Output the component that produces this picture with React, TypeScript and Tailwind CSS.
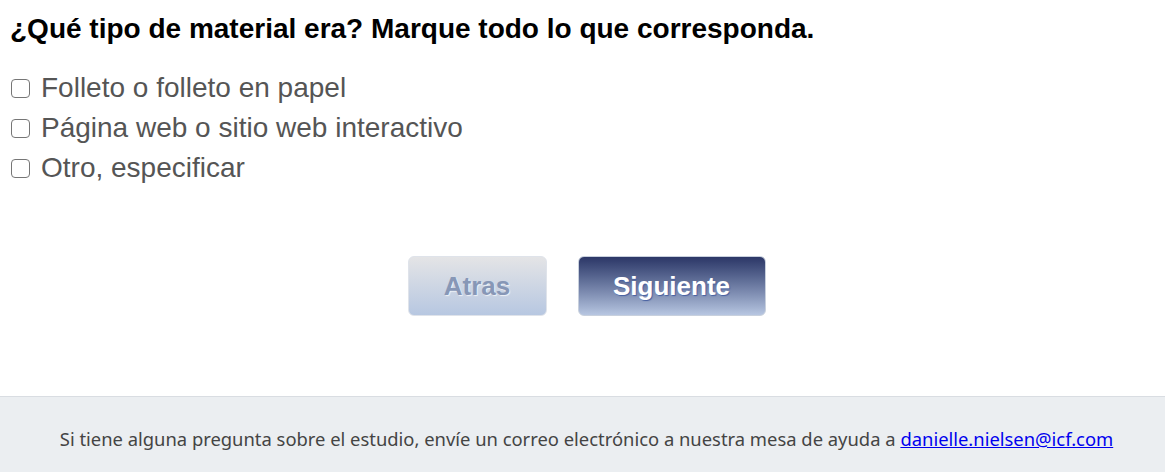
import React from "react";

export default function App() {
  const options = [
    "Folleto o folleto en papel",
    "Página web o sitio web interactivo",
    "Otro, especificar",
  ];
  return (
    <div className="w-[1165px] h-[472px] bg-white flex flex-col font-['Liberation_Sans',Arial,sans-serif]">
      <div className="flex-1 flex flex-col">
        <h1 className="pl-[10px] pt-[13px] text-[28px] leading-[32px] font-bold text-black">
          ¿Qué tipo de material era? Marque todo lo que corresponda.
        </h1>
        <div className="mt-[23px] pl-[11px] flex flex-col">
          {options.map((o) => (
            <label key={o} className="flex items-center h-[40px] text-[28px] leading-[40px] text-[#555555]">
              <span className="w-[19px] h-[19px] border-[1.5px] border-[#767676] rounded-[4px] bg-white mr-[11px] shrink-0" />
              <span>{o}</span>
            </label>
          ))}
        </div>
        <div className="mt-[68px] flex justify-center gap-[31px] pl-[8px]">
          <button className="w-[139px] h-[60px] rounded-[6px] border border-[#dfe3ea] bg-gradient-to-b from-[#e4e4e6] to-[#b7c7e1] text-[26px] font-bold text-[#8797b6] [text-shadow:1px_1px_1px_rgba(255,255,255,0.7)]">
            Atras
          </button>
          <button className="w-[188px] h-[60px] rounded-[6px] border border-[#c8d0dd] bg-gradient-to-b from-[#2c3767] to-[#b7c6e1] text-[26px] font-bold text-white [text-shadow:1px_1px_1px_rgba(70,95,160,1)]">
            Siguiente
          </button>
        </div>
      </div>
      <div className="h-[76px] border-t border-[#d9dde2] bg-[#ebeef1] pt-[29px] pl-[8px] text-center font-['Noto_Sans',sans-serif] text-[18.4px] leading-[25px] text-[#444444]">
        Si tiene alguna pregunta sobre el estudio, envíe un correo electrónico a nuestra mesa de ayuda a{" "}
        <a href="#" className="text-[#0000ee] underline">danielle.nielsen@icf.com</a>
      </div>
    </div>
  );
}
